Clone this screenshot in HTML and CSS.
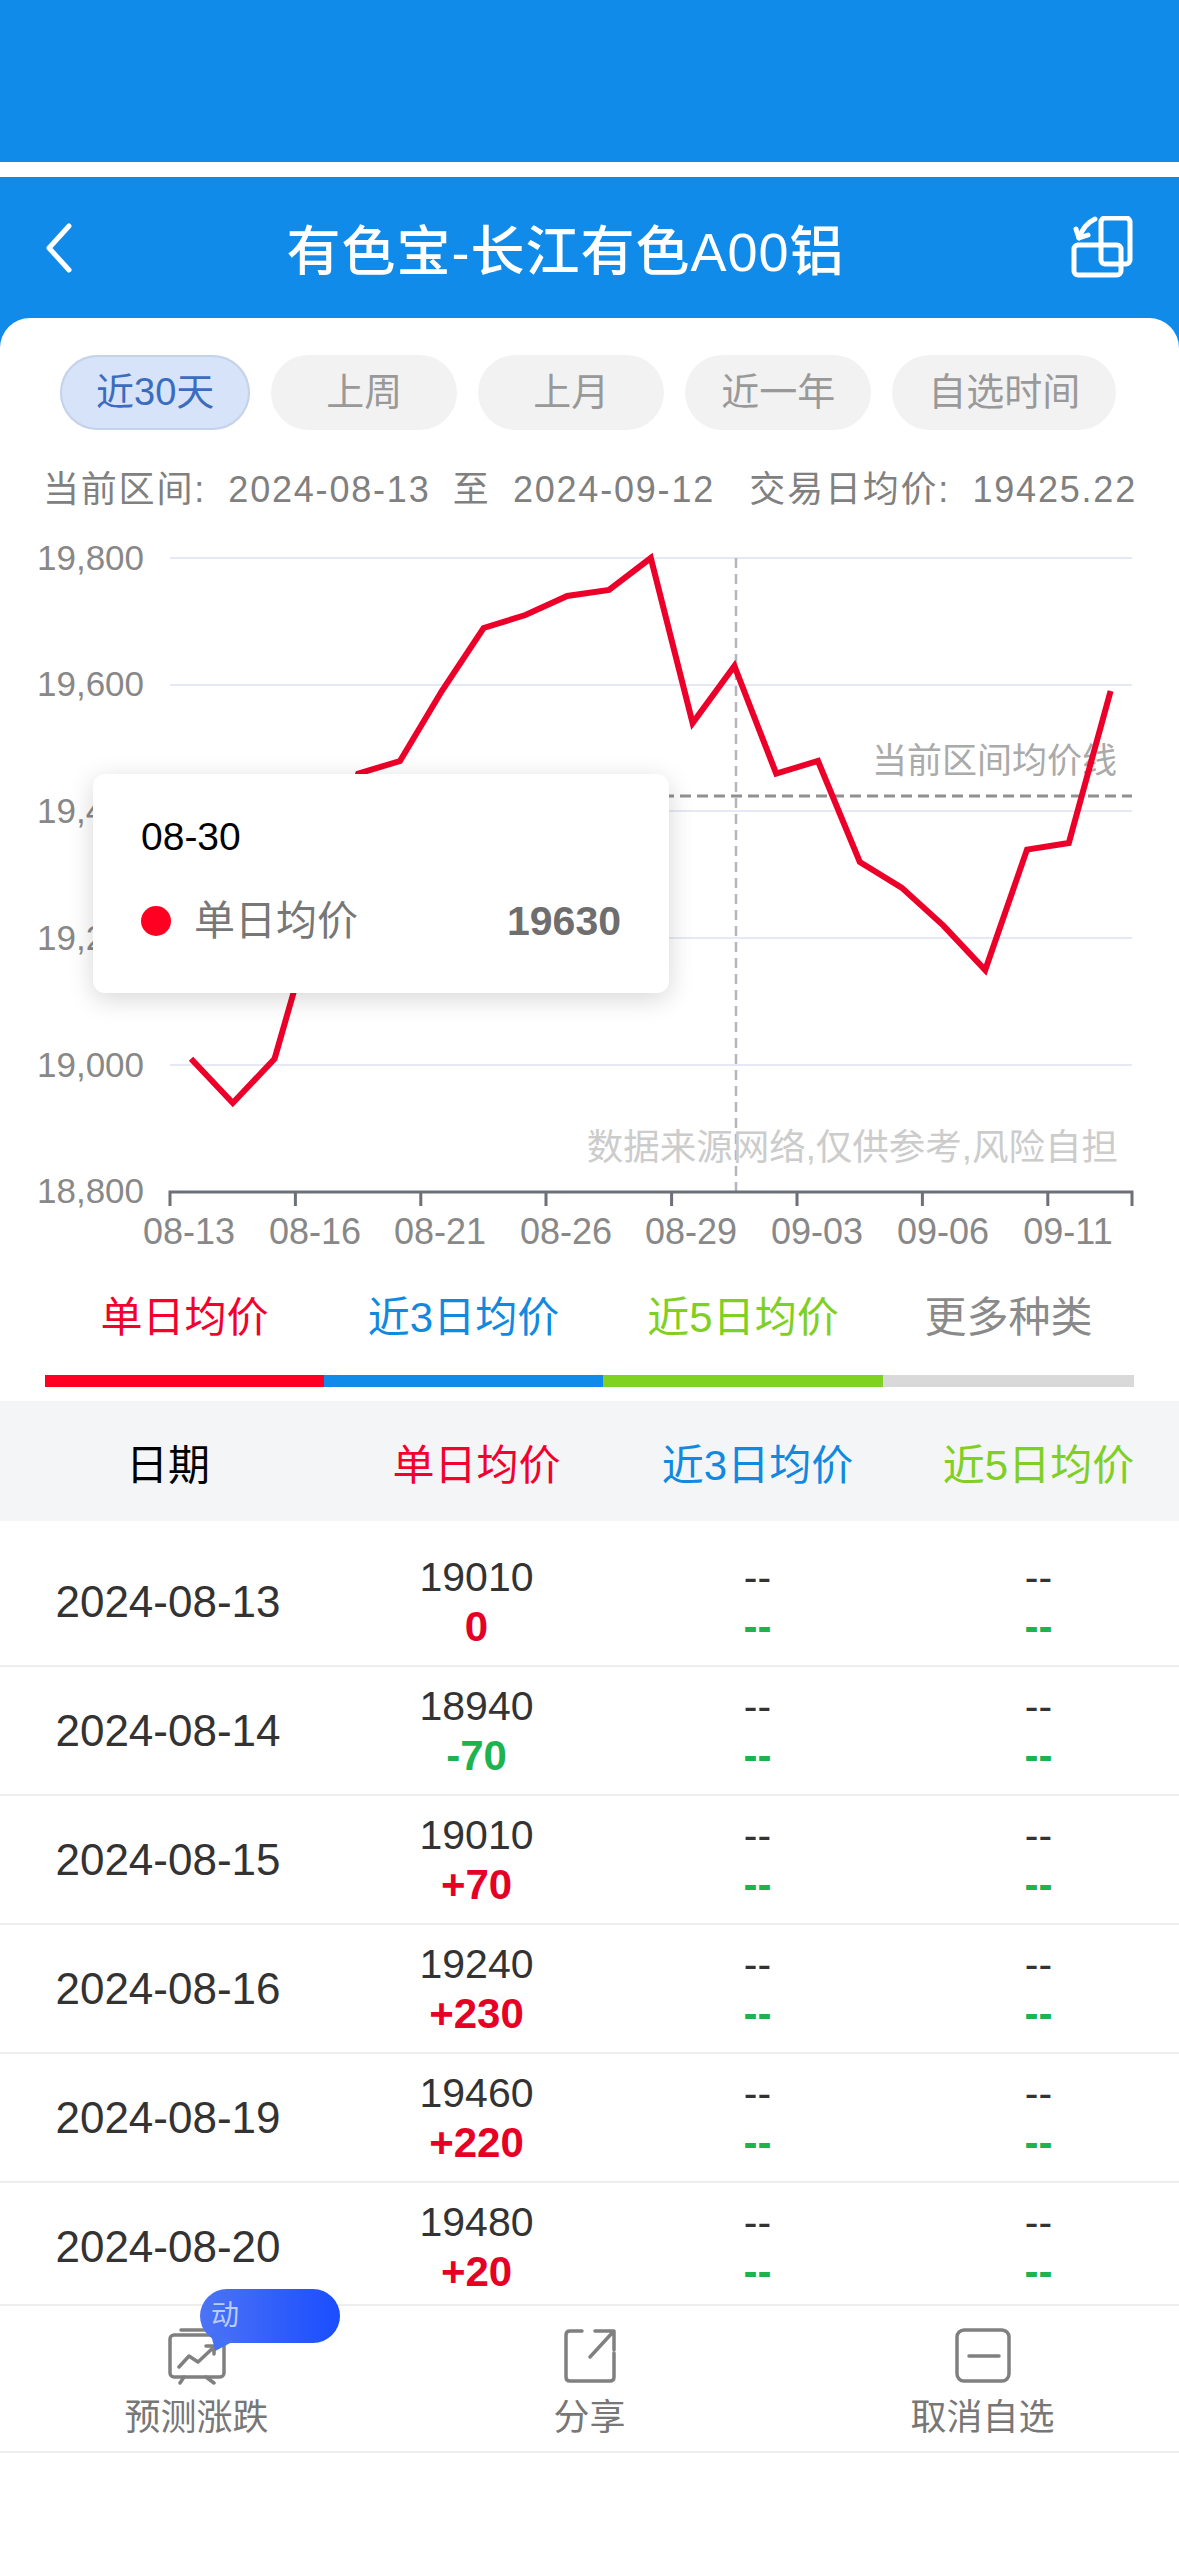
FILE: index.html
```html
<!DOCTYPE html>
<html lang="zh-CN">
<head>
    <meta charset="UTF-8">
    <meta name="viewport" content="width=device-width, initial-scale=1.0">
    <title>有色宝-长江有色A00铝</title>
    <link rel="stylesheet" href="styles.css">
</head>
<body>

    <div class="status-bar"></div>

    <div class="top">
        <header class="navbar">
            <svg class="nav-icon" width="30" height="50" viewBox="0 0 30 50">
                <path class="icon-white" d="M25 3 L5 25 L25 47"/>
            </svg>
            <h1>有色宝-长江有色A00铝</h1>
            <svg class="nav-icon" width="64" height="64" viewBox="0 0 64 64">
                <rect class="icon-white" x="30" y="2" width="29" height="46" rx="4"/>
                <rect class="icon-white" x="3" y="29" width="47" height="30" rx="4"/>
                <path class="icon-white" d="M24 3 Q13 8 8 22"/>
                <path class="icon-white" d="M5 13 L8 22 L17 19"/>
            </svg>
        </header>

        <main class="card">
            <div class="ranges">
                <span class="range active">近30天</span>
                <span class="range">上周</span>
                <span class="range">上月</span>
                <span class="range">近一年</span>
                <span class="range">自选时间</span>
            </div>

            <div class="period">
                <span>当前区间:</span>
                <span>2024-08-13</span>
                <span>至</span>
                <span>2024-09-12</span>
                <span class="period-avg">交易日均价:</span>
                <span>19425.22</span>
            </div>

            <div class="chart">
                <svg class="chart-svg" width="1179" height="773" viewBox="0 515 1179 773">
                    <g class="grid">
                        <line x1="170" x2="1132" y1="558" y2="558"/>
                        <line x1="170" x2="1132" y1="685" y2="685"/>
                        <line x1="170" x2="1132" y1="811" y2="811"/>
                        <line x1="170" x2="1132" y1="938" y2="938"/>
                        <line x1="170" x2="1132" y1="1065" y2="1065"/>
                    </g>
                    <g class="y-labels">
                        <text x="37" y="570">19,800</text>
                        <text x="37" y="696">19,600</text>
                        <text x="37" y="823">19,400</text>
                        <text x="37" y="950">19,200</text>
                        <text x="37" y="1077">19,000</text>
                        <text x="37" y="1203">18,800</text>
                    </g>
                    <line class="cross" x1="736" x2="736" y1="558" y2="1191"/>
                    <line class="avg-line" x1="170" x2="1132" y1="796" y2="796"/>
                    <text class="avg-label" x="1117" y="773">当前区间均价线</text>
                    <text class="source" x="1118" y="1160">数据来源网络,仅供参考,风险自担</text>
                    <path class="axis" d="M170 1206 V1192 H1132 V1206 M295.4 1192 V1206 M420.8 1192 V1206 M546 1192 V1206 M671.6 1192 V1206 M797 1192 V1206 M922.4 1192 V1206 M1047.8 1192 V1206"/>
                    <g class="x-labels">
                        <text x="189" y="1244">08-13</text>
                        <text x="315" y="1244">08-16</text>
                        <text x="440" y="1244">08-21</text>
                        <text x="566" y="1244">08-26</text>
                        <text x="691" y="1244">08-29</text>
                        <text x="817" y="1244">09-03</text>
                        <text x="943" y="1244">09-06</text>
                        <text x="1068" y="1244">09-11</text>
                    </g>
                    <polyline class="series" points="191,1058.7 232.8,1103 274.6,1058.7 316.4,913 358.2,773.6 400,761 441.8,691 483.6,628 525.4,615 567.2,596 609,590 650.8,558 692.6,723 734.4,666 776.2,773.6 818,761 859.8,862 901.6,887.6 943.4,925.6 985.2,970 1027,849.6 1068.8,843 1110.6,691"/>
                </svg>

                <div class="tooltip">
                    <div class="tooltip-date">08-30</div>
                    <div class="tooltip-row">
                        <i class="dot"></i>
                        <span class="tooltip-name">单日均价</span>
                        <b class="tooltip-value">19630</b>
                    </div>
                </div>
            </div>

            <div class="legend">
                <div class="legend-item red"><span>单日均价</span><i></i></div>
                <div class="legend-item blue"><span>近3日均价</span><i></i></div>
                <div class="legend-item green"><span>近5日均价</span><i></i></div>
                <div class="legend-item gray"><span>更多种类</span><i></i></div>
            </div>

            <div class="table-head">
                <span class="head-date">日期</span>
                <span class="red">单日均价</span>
                <span class="blue">近3日均价</span>
                <span class="green">近5日均价</span>
            </div>

            <div class="table-body">
                <div class="row">
                    <div class="date">2024-08-13</div>
                    <div class="cell"><span>19010</span><b class="up">0</b></div>
                    <div class="cell"><span>--</span><b class="down">--</b></div>
                    <div class="cell"><span>--</span><b class="down">--</b></div>
                </div>
                <div class="row">
                    <div class="date">2024-08-14</div>
                    <div class="cell"><span>18940</span><b class="down">-70</b></div>
                    <div class="cell"><span>--</span><b class="down">--</b></div>
                    <div class="cell"><span>--</span><b class="down">--</b></div>
                </div>
                <div class="row">
                    <div class="date">2024-08-15</div>
                    <div class="cell"><span>19010</span><b class="up">+70</b></div>
                    <div class="cell"><span>--</span><b class="down">--</b></div>
                    <div class="cell"><span>--</span><b class="down">--</b></div>
                </div>
                <div class="row">
                    <div class="date">2024-08-16</div>
                    <div class="cell"><span>19240</span><b class="up">+230</b></div>
                    <div class="cell"><span>--</span><b class="down">--</b></div>
                    <div class="cell"><span>--</span><b class="down">--</b></div>
                </div>
                <div class="row">
                    <div class="date">2024-08-19</div>
                    <div class="cell"><span>19460</span><b class="up">+220</b></div>
                    <div class="cell"><span>--</span><b class="down">--</b></div>
                    <div class="cell"><span>--</span><b class="down">--</b></div>
                </div>
                <div class="row">
                    <div class="date">2024-08-20</div>
                    <div class="cell"><span>19480</span><b class="up">+20</b></div>
                    <div class="cell"><span>--</span><b class="down">--</b></div>
                    <div class="cell"><span>--</span><b class="down">--</b></div>
                </div>
            </div>

            <footer class="toolbar">
                <div class="tool">
                    <div class="badge">动</div>
                    <svg width="60" height="58" viewBox="0 0 60 58">
                        <path class="icon-gray" d="M14 3 H40"/>
                        <rect class="icon-gray" x="3" y="8" width="54" height="42" rx="4"/>
                        <path class="icon-gray" d="M12 40 L22 29 L31 35 L47 20 M39 19 H47 V27 M17 50 L13 56 M39 50 L47 56"/>
                    </svg>
                    <span class="tool-name">预测涨跌</span>
                </div>
                <div class="tool">
                    <svg width="60" height="58" viewBox="0 0 60 58">
                        <path class="icon-gray" d="M22 4 H10 Q6 4 6 8 V50 Q6 54 10 54 H50 Q54 54 54 50 V26"/>
                        <path class="icon-gray" d="M30 30 L53 5 M35 4 H54 V23"/>
                    </svg>
                    <span class="tool-name">分享</span>
                </div>
                <div class="tool">
                    <svg width="60" height="58" viewBox="0 0 60 58">
                        <rect class="icon-gray" x="4" y="3" width="52" height="51" rx="7"/>
                        <path class="icon-gray" d="M16 29 H46"/>
                    </svg>
                    <span class="tool-name">取消自选</span>
                </div>
            </footer>
        </main>
    </div>

</body>
</html>
```

FILE: styles.css
```css
* {
    box-sizing: border-box;
}
body {
    margin: 0;
    width: 1179px;
    height: 2556px;
    overflow: hidden;
    background-color: #fff;
    font-family: "Liberation Sans", "Noto Sans CJK SC", sans-serif;
}
.status-bar {
    height: 162px;
    margin-bottom: 15px;
    background-color: #108bea;
}
.top {
    background-color: #108bea;
}
.navbar {
    display: flex;
    align-items: center;
    justify-content: space-between;
    height: 141px;
    padding: 0 44px 0 44px;
    color: white;
}
.navbar h1 {
    margin: 0 0 0 -14px;
    font-size: 54px;
    font-weight: 500;
    letter-spacing: 1px;
}
.icon-white {
    fill: none;
    stroke: white;
    stroke-width: 5;
    stroke-linecap: round;
    stroke-linejoin: round;
}
.icon-gray {
    fill: none;
    stroke: #808080;
    stroke-width: 3.5;
    stroke-linecap: round;
    stroke-linejoin: round;
}
.card {
    height: 2238px;
    padding-top: 37px;
    background-color: #fff;
    border-radius: 30px 30px 0 0;
}
.ranges {
    display: flex;
    gap: 21px;
    padding-left: 60px;
}
.range {
    min-width: 186px;
    height: 75px;
    padding: 0 36px;
    border-radius: 38px;
    background-color: #f2f2f2;
    color: #999;
    font-size: 38px;
    line-height: 75px;
    text-align: center;
}
.range.active {
    background-color: #d6e3f8;
    box-shadow: inset 0 0 0 2px #c5d3ea;
    color: #3a6cbf;
}
.period {
    display: flex;
    justify-content: space-between;
    height: 50px;
    margin-top: 35px;
    padding: 0 42px 0 43px;
    color: #808080;
    font-size: 36px;
    line-height: 50px;
    letter-spacing: 1.8px;
}
.period-avg {
    margin-left: 12px;
}
.chart {
    position: relative;
    height: 773px;
}
.chart-svg {
    display: block;
}
.grid line {
    stroke: #e6e8f5;
    stroke-width: 2;
}
.y-labels text {
    fill: #888;
    font-size: 35px;
}
.x-labels text {
    fill: #888;
    font-size: 36px;
    text-anchor: middle;
}
.cross {
    stroke: #b5b5bd;
    stroke-width: 2.5;
    stroke-dasharray: 10 6;
}
.avg-line {
    stroke: #909090;
    stroke-width: 3;
    stroke-dasharray: 11 6;
}
.avg-label {
    fill: #aaa;
    font-size: 35px;
    text-anchor: end;
}
.source {
    fill: #ccc;
    font-size: 36.5px;
    text-anchor: end;
}
.axis {
    fill: none;
    stroke: #6e7079;
    stroke-width: 3;
}
.series {
    fill: none;
    stroke: #ec0029;
    stroke-width: 6;
    stroke-linejoin: miter;
}
.tooltip {
    position: absolute;
    top: 259px;
    left: 93px;
    width: 576px;
    height: 219px;
    padding: 38px 48px 0;
    background-color: #fff;
    border-radius: 12px;
    box-shadow: 0 6px 26px rgba(0, 0, 0, 0.16);
}
.tooltip-date {
    height: 50px;
    color: #000;
    font-size: 39px;
    line-height: 50px;
}
.tooltip-row {
    display: flex;
    align-items: center;
    margin-top: 34px;
    color: #777;
}
.dot {
    width: 30px;
    height: 30px;
    margin-right: 23px;
    border-radius: 50%;
    background-color: #ff0022;
}
.tooltip-name {
    flex: 1;
    font-size: 41px;
    line-height: 50px;
}
.tooltip-value {
    color: #6e6e6e;
    font-size: 41px;
}
.legend {
    display: grid;
    grid-template-columns: 279px 279px 280px 1fr;
    padding: 0 45px;
}
.legend-item {
    display: flex;
    flex-direction: column;
    align-items: center;
    font-size: 42px;
    line-height: 60px;
}
.legend-item i {
    align-self: stretch;
    height: 12px;
    margin-top: 27px;
}
.red {
    color: #f5002e;
}
.blue {
    color: #1089e0;
}
.green {
    color: #7fd022;
}
.gray {
    color: #8a8a8a;
}
.legend-item.red i {
    background-color: #ff0022;
}
.legend-item.blue i {
    background-color: #108bea;
}
.legend-item.green i {
    background-color: #7ed321;
}
.legend-item.gray i {
    background-color: #d9d9d9;
}
.table-head,
.row {
    display: grid;
    grid-template-columns: 336px 1fr 1fr 1fr;
    text-align: center;
}
.table-head {
    align-items: center;
    height: 120px;
    margin-top: 14px;
    background-color: #f4f5f7;
    font-size: 42px;
    white-space: nowrap;
}
.head-date {
    color: #000;
}
.table-body {
    height: 783px;
    padding-top: 17px;
    overflow: hidden;
}
.row {
    flex: none;
    height: 129px;
    align-items: center;
    border-bottom: 2px solid #eee;
    color: #333;
}
.date {
    font-size: 44px;
}
.cell {
    display: flex;
    flex-direction: column;
    font-size: 41px;
    line-height: 50px;
}
.cell b {
    font-size: 42px;
}
.up {
    color: #e60026;
}
.down {
    color: #1db34f;
}
.toolbar {
    display: grid;
    grid-template-columns: repeat(3, 1fr);
    height: 149px;
    border-top: 2px solid #eee;
    border-bottom: 2px solid #eee;
    position: relative;
}
.tool {
    display: flex;
    flex-direction: column;
    align-items: center;
    padding-top: 21px;
    color: #777;
}
.tool-name {
    margin-top: 8px;
    font-size: 36px;
    line-height: 50px;
}
.badge {
    position: absolute;
    top: -17px;
    left: 200px;
    width: 140px;
    height: 54px;
    padding-left: 11px;
    border-radius: 27px;
    background: linear-gradient(90deg, #4d74f5, #1a4dff);
    color: #b9ccff;
    font-size: 28px;
    line-height: 54px;
}
.badge::after {
    content: "";
    position: absolute;
    left: 10px;
    top: 42px;
    width: 24px;
    height: 20px;
    background-color: #4470f6;
    clip-path: polygon(0 0, 100% 50%, 22% 100%);
}
```
